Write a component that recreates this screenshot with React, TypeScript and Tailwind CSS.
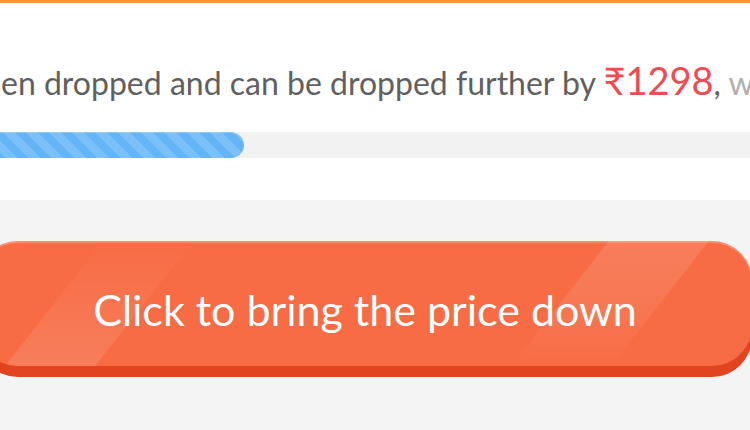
export default function App() {
  return (
    <div className="w-[750px] h-[430px] overflow-hidden bg-[#f4f4f4] font-['Lato',sans-serif]">
      <div className="h-[3px] bg-[#fb9540]" />

      <div className="h-[197px] bg-white pt-[57px]">
        <p className="h-[42px] text-[32px] leading-[40px] whitespace-nowrap text-[#606060] pl-[1px]">
          en dropped and can be dropped further by{" "}
          <span className="text-[38px] text-[#ef4b53]">₹1298</span>,{" "}
          <span className="text-[#b0b0b0]">which is</span>
        </p>

        <div className="mt-[30px] h-[26px] w-[800px] bg-[#f2f2f2]">
          <div className="-ml-[20px] h-full w-[264px] rounded-full bg-[#64b5f6] bg-[linear-gradient(45deg,rgba(255,255,255,0.15)_25%,transparent_25%,transparent_50%,rgba(255,255,255,0.15)_50%,rgba(255,255,255,0.15)_75%,transparent_75%,transparent)] bg-[length:23px_23px] shadow-[inset_0_1px_0_rgba(255,255,255,0.25)]" />
        </div>
      </div>

      <div className="relative mt-[41px] -ml-[22px] h-[125px] w-[774px] cursor-pointer overflow-hidden rounded-[40px] bg-[#f76c45] shadow-[inset_0_2px_0_rgba(255,255,255,0.22),0_11px_0_#e1441f] pt-[43px] text-center text-[43px] leading-[52px] text-white">
        <span className="absolute inset-y-0 left-[76px] w-[90px] -skew-x-[38deg] bg-gradient-to-t from-white/12 to-transparent" />
        <span className="absolute inset-y-0 left-[582px] w-[100px] -skew-x-[38deg] bg-gradient-to-b from-white/12 via-white/8 to-transparent" />
        <span className="relative">Click to bring the price down</span>
      </div>
    </div>
  )
}
